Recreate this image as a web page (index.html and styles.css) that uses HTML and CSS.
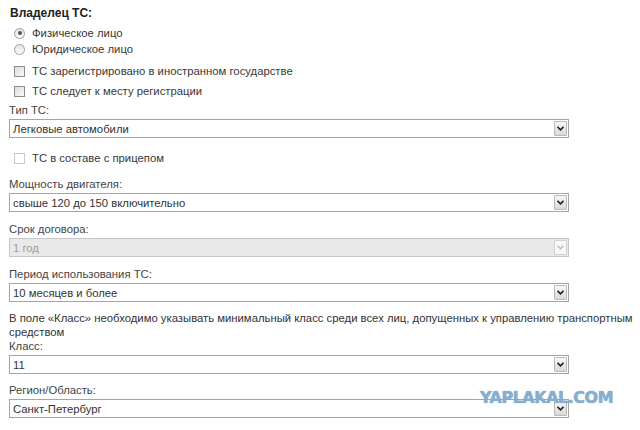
FILE: index.html
```html
<!DOCTYPE html>
<html lang="ru">
<head>
<meta charset="utf-8">
<title>Владелец ТС</title>
<link rel="stylesheet" href="styles.css">
</head>
<body>
<div class="form">
  <div class="heading">Владелец ТС:</div>
  <div class="radios">
    <div class="radio-row"><span class="radio checked"></span><span>Физическое лицо</span></div>
    <div class="radio-row"><span class="radio"></span><span>Юридическое лицо</span></div>
  </div>
  <div class="check-row first"><span class="box"></span><span>ТС зарегистрировано в иностранном государстве</span></div>
  <div class="check-row"><span class="box"></span><span>ТС следует к месту регистрации</span></div>

  <div class="label l-type">Тип ТС:</div>
  <div class="select"><span class="value">Легковые автомобили</span><span class="arrow"><svg width="7" height="5" viewBox="0 0 7 5"><path d="M0.5 0.8 L3.5 3.8 L6.5 0.8" fill="none" stroke="#222" stroke-width="1.6"/></svg></span></div>

  <div class="check-row trailer"><span class="box disabled"></span><span>ТС в составе с прицепом</span></div>

  <div class="label l-power">Мощность двигателя:</div>
  <div class="select"><span class="value">свыше 120 до 150 включительно</span><span class="arrow"><svg width="7" height="5" viewBox="0 0 7 5"><path d="M0.5 0.8 L3.5 3.8 L6.5 0.8" fill="none" stroke="#222" stroke-width="1.6"/></svg></span></div>

  <div class="label l-term">Срок договора:</div>
  <div class="select disabled"><span class="value">1 год</span><span class="arrow"><svg width="7" height="5" viewBox="0 0 7 5"><path d="M0.5 0.8 L3.5 3.8 L6.5 0.8" fill="none" stroke="#b8b8b8" stroke-width="1.3"/></svg></span></div>

  <div class="label l-period">Период использования ТС:</div>
  <div class="select"><span class="value">10 месяцев и более</span><span class="arrow"><svg width="7" height="5" viewBox="0 0 7 5"><path d="M0.5 0.8 L3.5 3.8 L6.5 0.8" fill="none" stroke="#222" stroke-width="1.6"/></svg></span></div>

  <p class="note">В поле «Класс» необходимо указывать минимальный класс среди всех лиц, допущенных к управлению транспортным средством</p>
  <div class="label l-class">Класс:</div>
  <div class="select"><span class="value">11</span><span class="arrow"><svg width="7" height="5" viewBox="0 0 7 5"><path d="M0.5 0.8 L3.5 3.8 L6.5 0.8" fill="none" stroke="#222" stroke-width="1.6"/></svg></span></div>

  <div class="label l-region">Регион/Область:</div>
  <div class="select"><span class="value">Санкт-Петербург</span><span class="arrow"><svg width="7" height="5" viewBox="0 0 7 5"><path d="M0.5 0.8 L3.5 3.8 L6.5 0.8" fill="none" stroke="#222" stroke-width="1.6"/></svg></span></div>
</div>
<div class="watermark">YAPLAKAL.COM</div>
</body>
</html>
```
FILE: styles.css
```css
html, body {
  margin: 0;
  padding: 0;
  background: #fff;
}
body {
  position: relative;
  width: 640px;
  height: 430px;
  overflow: hidden;
  font-family: "Liberation Sans", Arial, sans-serif;
  font-size: 11.3px;
  line-height: 14px;
  color: #383838;
}
.form {
  display: flex;
  flex-direction: column;
  padding: 6px 0 0 9px;
}
.heading {
  font-weight: bold;
  font-size: 12px;
  color: #222;
  margin-left: 1px;
}
.radios {
  margin-top: 5px;
  display: flex;
  flex-direction: column;
}
.radio-row, .check-row {
  display: flex;
  align-items: center;
  height: 16px;
}
.radio {
  width: 9px;
  height: 9px;
  border-radius: 50%;
  border: 1px solid #a0a0a0;
  background: linear-gradient(#e4e4e4, #fbfbfb);
  margin: 0 7px 0 5px;
  display: flex;
  align-items: center;
  justify-content: center;
  box-sizing: content-box;
}
.radio.checked::after {
  content: "";
  width: 4px;
  height: 4px;
  border-radius: 50%;
  background: #555;
}
.check-row {
  height: 20px;
}
.check-row.first {
  margin-top: 4px;
}
.box {
  width: 9px;
  height: 9px;
  border: 1px solid #8c8c8c;
  background: linear-gradient(135deg, #dcdcdc, #fafafa);
  margin: 0 7px 0 5px;
}
.box.disabled {
  border-color: #c9c9c9;
  background: #fff;
}
.check-row.trailer {
  margin-top: 10px;
  margin-bottom: 9px;
}
.label {
  color: #444;
}
.l-type { margin-top: 2px; }
.l-term, .l-period { margin-top: 10px; }
.l-region { margin-top: 9px; }
.select {
  margin-top: 2px;
  width: 558px;
  height: 17px;
  border: 1px solid #a5a5a5;
  background: #fff;
  display: flex;
  align-items: center;
  justify-content: space-between;
}
.select .value {
  padding-left: 3px;
  color: #333;
}
.select .arrow {
  width: 13px;
  height: 15px;
  margin-right: 1px;
  border: 1px solid #b9b9b9;
  border-radius: 1px;
  background: linear-gradient(#f6f6f6, #d9d9d9);
  display: flex;
  align-items: center;
  justify-content: center;
  box-sizing: border-box;
}
.select.disabled {
  background: #e9e9e9;
  border-color: #c6c6c6;
}
.select.disabled .value {
  color: #a0a0a0;
}
.select.disabled .arrow {
  background: #f8f8f8;
  border-color: #d2d2d2;
}
.note {
  margin: 9px 0 0;
  width: 631px;
  color: #333;
}
.watermark {
  position: absolute;
  left: 480px;
  top: 391px;
  font-family: "DejaVu Sans", sans-serif;
  font-weight: bold;
  font-size: 16px;
  letter-spacing: -0.5px;
  color: #86aed0;
  text-shadow: 0 0 1px #6f97ba;
}
```
